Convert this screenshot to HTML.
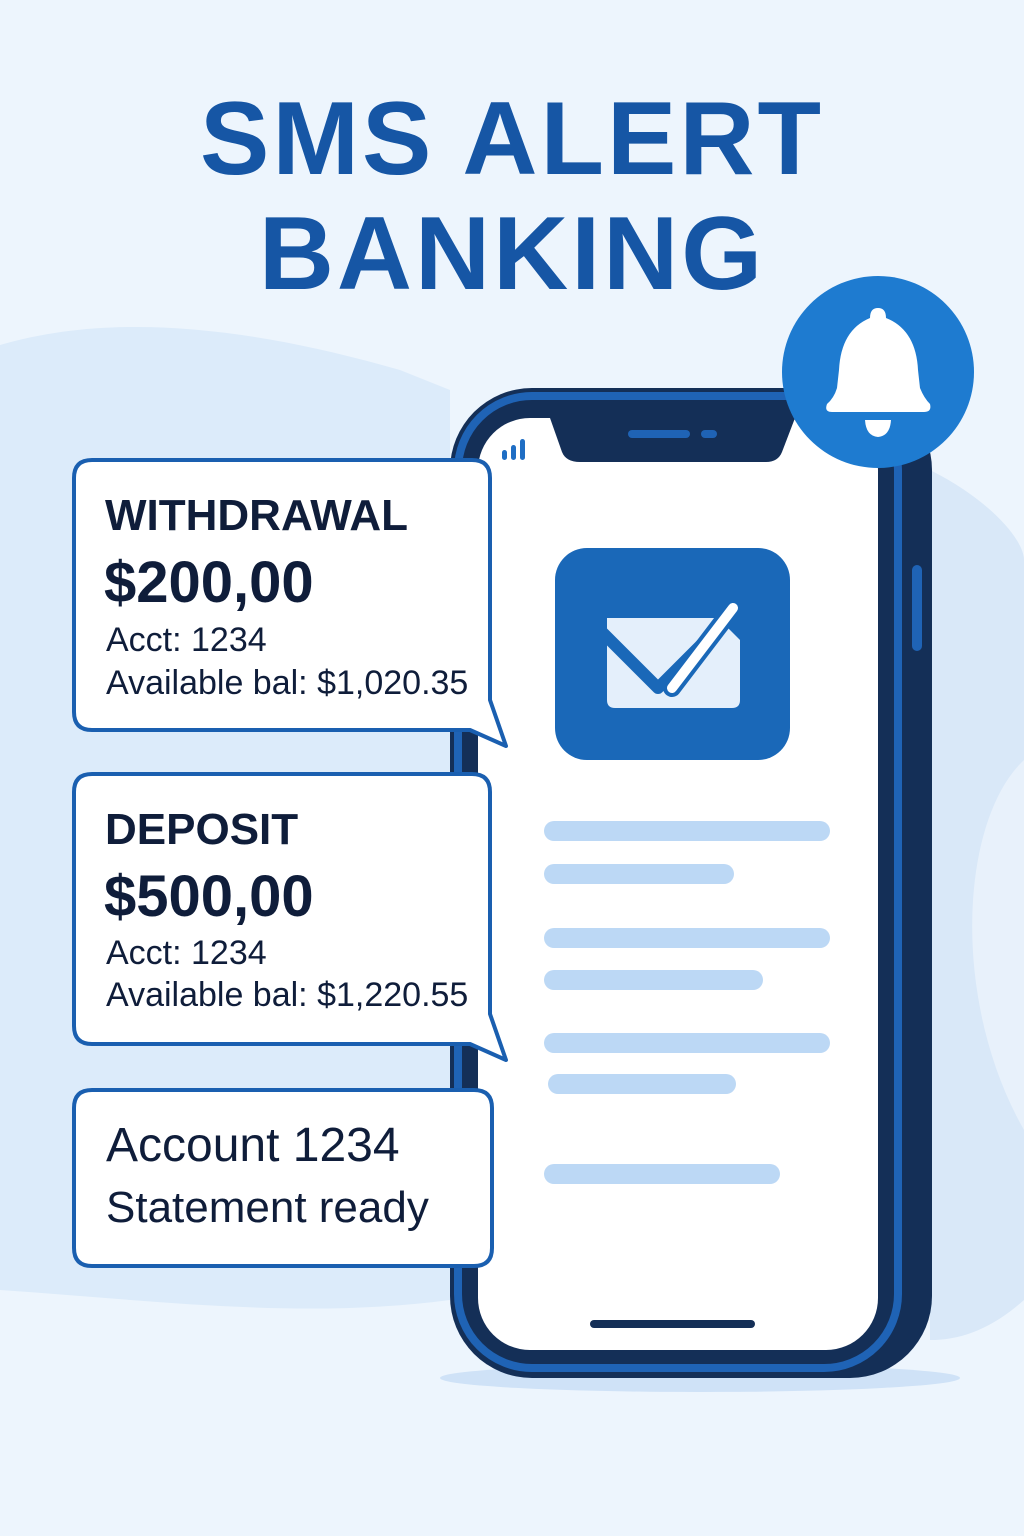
<!DOCTYPE html>
<html><head><meta charset="utf-8"><style>
html,body{margin:0;padding:0}
body{width:1024px;height:1536px;position:relative;overflow:hidden;background:#edf5fd;font-family:"Liberation Sans","DejaVu Sans",sans-serif}
.t{position:absolute;left:0;width:1024px;text-align:center;color:#1656a5;font-weight:bold;font-size:104px;line-height:1;letter-spacing:3px}
.b{position:absolute;color:#0f1d3a;white-space:nowrap}
</style></head><body>
<svg width="1024" height="1536" style="position:absolute;left:0;top:0">
<path d="M0 345 C120 310 260 330 400 370 L450 390 L450 1300 C300 1320 150 1300 0 1290 Z" fill="#dcebfa"/>
<path d="M930 470 C990 500 1024 540 1024 560 L1024 1300 C990 1330 960 1340 930 1340 Z" fill="#d9e8f8"/>
<path d="M1024 760 C960 820 950 1000 1024 1130 Z" fill="#e8f1fb"/>
<ellipse cx="700" cy="1378" rx="260" ry="14" fill="#cfe2f7"/>
<rect x="450" y="388" width="482" height="990" rx="82" fill="#142f57"/>
<rect x="458" y="396" width="440" height="972" rx="74" fill="none" stroke="#1f63b5" stroke-width="8"/>
<rect x="478" y="418" width="400" height="932" rx="52" fill="#ffffff"/>
<path d="M550 418 L795 418 L782 452 Q778 462 766 462 L580 462 Q566 462 562 452 Z" fill="#142f57"/>
<rect x="628" y="430" width="62" height="8" rx="4" fill="#1f63b5"/>
<rect x="701" y="430" width="16" height="8" rx="4" fill="#1f63b5"/>
<rect x="502" y="450" width="5" height="10" rx="2.5" fill="#1f6ec4"/>
<rect x="511" y="445" width="5" height="15" rx="2.5" fill="#1f6ec4"/>
<rect x="520" y="439" width="5" height="21" rx="2.5" fill="#1f6ec4"/>
<rect x="912" y="565" width="10" height="86" rx="5" fill="#1f63b5"/>
<rect x="590" y="1320" width="165" height="8" rx="4" fill="#142f57"/>
<rect x="555" y="548" width="235" height="212" rx="32" fill="#1a68b8"/>
<path d="M607 618 L718 618 L740 640 L740 700 Q740 708 732 708 L615 708 Q607 708 607 700 Z" fill="#e4effb"/>
<path d="M596 626 L658 688 L720 626" fill="none" stroke="#1a68b8" stroke-width="12" stroke-linejoin="round"/>
<line x1="672" y1="688" x2="733" y2="608" stroke="#1a68b8" stroke-width="18" stroke-linecap="round"/>
<line x1="672" y1="688" x2="733" y2="608" stroke="#ffffff" stroke-width="10" stroke-linecap="round"/>
<g fill="#bcd8f5">
<rect x="544" y="821" width="286" height="20" rx="10"/>
<rect x="544" y="864" width="190" height="20" rx="10"/>
<rect x="544" y="928" width="286" height="20" rx="10"/>
<rect x="544" y="970" width="219" height="20" rx="10"/>
<rect x="544" y="1033" width="286" height="20" rx="10"/>
<rect x="548" y="1074" width="188" height="20" rx="10"/>
<rect x="544" y="1164" width="236" height="20" rx="10"/>
</g>
<circle cx="878" cy="372" r="96" fill="#1e7bd0"/>
<path d="M870 318 Q870 308 878 308 Q886 308 886 318 Q916 330 918 370 L920 388 Q924 398 930 404 Q932 412 924 412 L832 412 Q824 412 827 404 Q834 398 837 388 L839 370 Q841 330 870 318 Z" fill="#fff"/>
<path d="M865 420 L891 420 Q890 436 878 437 Q866 436 865 420 Z" fill="#fff"/>
<g fill="#fff" stroke="#1a5fb0" stroke-width="4" stroke-linejoin="round">
<path d="M92 460 L472 460 Q490 460 490 478 L490 700 L506 746 L470 730 L92 730 Q74 730 74 712 L74 478 Q74 460 92 460 Z"/>
<path d="M92 774 L472 774 Q490 774 490 792 L490 1014 L506 1060 L470 1044 L92 1044 Q74 1044 74 1026 L74 792 Q74 774 92 774 Z"/>
<path d="M92 1090 L474 1090 Q492 1090 492 1108 L492 1248 Q492 1266 474 1266 L92 1266 Q74 1266 74 1248 L74 1108 Q74 1090 92 1090 Z"/>
</g>
</svg>
<div class="t" style="top:87px">SMS ALERT</div>
<div class="t" style="top:202px">BANKING</div>

<div class="b" style="left:105px;top:491px;font-size:44px;font-weight:bold">WITHDRAWAL</div>
<div class="b" style="left:104px;top:549px;font-size:58px;font-weight:bold">$200,00</div>
<div class="b" style="left:106px;top:621px;font-size:34px">Acct: 1234</div>
<div class="b" style="left:106px;top:664px;font-size:34px">Available bal: $1,020.35</div>

<div class="b" style="left:105px;top:805px;font-size:44px;font-weight:bold">DEPOSIT</div>
<div class="b" style="left:104px;top:863px;font-size:58px;font-weight:bold">$500,00</div>
<div class="b" style="left:106px;top:934px;font-size:34px">Acct: 1234</div>
<div class="b" style="left:106px;top:976px;font-size:34px">Available bal: $1,220.55</div>

<div class="b" style="left:106px;top:1118px;font-size:48px">Account 1234</div>
<div class="b" style="left:106px;top:1183px;font-size:44px">Statement ready</div>
</body></html>
